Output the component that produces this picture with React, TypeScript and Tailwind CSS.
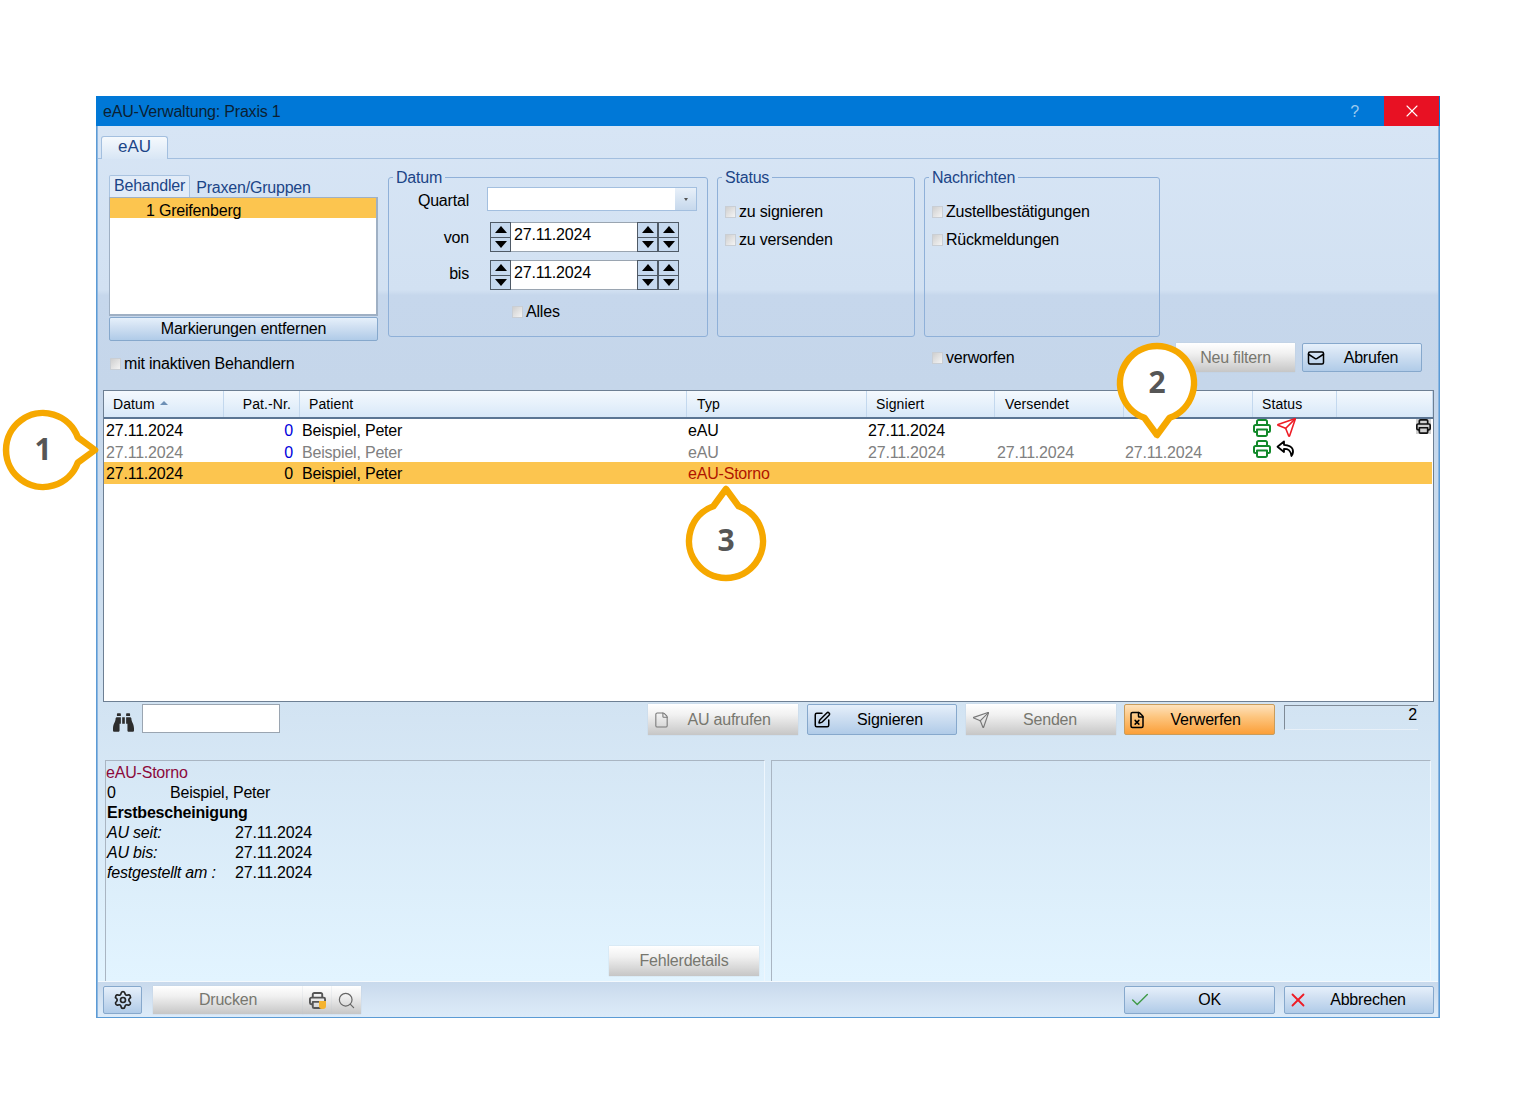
import type { ReactNode } from "react";
import { Check, File, FileX, Mail, Search, Send, Settings, SquarePen, X } from "lucide-react";
import { FaBinoculars } from "react-icons/fa";

const grayBtn = "bg-[linear-gradient(180deg,#ffffff_0%,#f1f1f1_35%,#c6c6c6_100%)] text-[#77776f] shadow-[0_0_1px_#b9c4cf]";
const blueBtn = "bg-[linear-gradient(180deg,#e6f0fb_0%,#d3e2f3_35%,#b0cbe8_100%)] text-black border border-[#86a8cc] rounded-[2px]";
const orangeBtn = "bg-[linear-gradient(180deg,#fde2bd_0%,#fdc680_40%,#fb9f38_100%)] text-black border border-[#c89c5c] rounded-[2px]";

function Btn({ className, icon, children }: { className: string; icon?: ReactNode; children: ReactNode }) {
  return (
    <button className={`relative flex items-center justify-center shrink-0 ${className}`}>
      {icon && <span className="absolute left-[6px] top-1/2 -translate-y-1/2 flex">{icon}</span>}
      {children}
    </button>
  );
}

function Checkbox({ label, className = "" }: { label: string; className?: string }) {
  return (
    <div className={`flex items-center ${className}`}>
      <span className="w-[11px] h-[12px] mr-[3px] shrink-0 bg-[linear-gradient(135deg,#cfcfcf_0%,#f4f4f4_100%)] border border-[#c9ced4]" />
      <span>{label}</span>
    </div>
  );
}

function GroupBox({ title, className, children }: { title: string; className: string; children?: ReactNode }) {
  return (
    <fieldset className={`border border-[#8fb0d8] rounded-[3px] h-[170px] shrink-0 px-[8px] ${className}`}>
      <legend className="text-[#1c4587] leading-[20px] px-[3px] -ml-[4px]">
        <span className="relative top-px">{title}</span>
      </legend>
      {children}
    </fieldset>
  );
}

function Spinner() {
  return (
    <div className="w-[21px] h-full flex flex-col border border-[#4f5a66] bg-[#c6d9ef] shrink-0">
      <div className="flex-1 flex items-center justify-center border-b border-[#4f5a66]">
        <span className="w-0 h-0 border-x-[6px] border-x-transparent border-b-[7px] border-b-black" />
      </div>
      <div className="flex-1 flex items-center justify-center">
        <span className="w-0 h-0 border-x-[6px] border-x-transparent border-t-[7px] border-t-black" />
      </div>
    </div>
  );
}

function DateField({ label, className, labelClass }: { label: string; className: string; labelClass: string }) {
  return (
    <div className={`flex items-center h-[30px] ${className}`}>
      <span className={`w-[72px] text-right mr-[21px] shrink-0 ${labelClass}`}>{label}</span>
      <Spinner />
      <div className="w-[126px] h-full bg-white pl-[3px] leading-[23px] border-y border-[#9aa5b1]">27.11.2024</div>
      <Spinner />
      <Spinner />
    </div>
  );
}

function PrinterIcon({ color, size = 18 }: { color: string; size?: number }) {
  return (
    <svg width={size} height={size} viewBox="0 0 18 18" fill="none" stroke={color} strokeWidth="2" strokeLinejoin="round">
      <path d="M4 6V2.5A1.5 1.5 0 0 1 5.5 1h7A1.5 1.5 0 0 1 14 2.5V6" />
      <path d="M4 13H2.5A1.5 1.5 0 0 1 1 11.5V7.5A1.5 1.5 0 0 1 2.5 6h13A1.5 1.5 0 0 1 17 7.5v4a1.5 1.5 0 0 1-1.5 1.5H14" />
      <path d="M4 10.5h10V15.5a1.5 1.5 0 0 1-1.5 1.5h-7A1.5 1.5 0 0 1 4 15.5z" />
    </svg>
  );
}

function ReplyIcon() {
  return (
    <svg width="20" height="18" viewBox="0 0 20 18" fill="none" stroke="#000" strokeWidth="1.8" strokeLinejoin="round" className="ml-[5px]">
      <path d="M8 1.5 1.5 6.8 8 12V8.8c4 0 6.6 1 7.4 7.2 2.6-3.6 3.2-10.6-7.4-11.2z" />
    </svg>
  );
}

const rowGrid = "grid grid-cols-[120px_76px_387px_180px_128px_129px_129px_84px_1fr]";

type Row = { pat: string; typ: string; signiert?: string; versendet?: string; col?: string; tone: "normal" | "gray" | "selected"; status?: ReactNode; last?: ReactNode };

const rows: Row[] = [
  {
    pat: "0",
    typ: "eAU",
    signiert: "27.11.2024",
    tone: "normal",
    status: (
      <>
        <PrinterIcon color="#12892a" />
        <Send size={21} color="#ee1c25" strokeWidth={1.8} className="ml-[5px] -mt-[2px]" />
      </>
    ),
    last: (
      <span className="bg-[#d0d0d0] flex">
        <PrinterIcon color="#111" size={15} />
      </span>
    ),
  },
  {
    pat: "0",
    typ: "eAU",
    signiert: "27.11.2024",
    versendet: "27.11.2024",
    col: "27.11.2024",
    tone: "gray",
    status: (
      <>
        <PrinterIcon color="#12892a" />
        <ReplyIcon />
      </>
    ),
  },
  { pat: "0", typ: "eAU-Storno", tone: "selected" },
];

function Table() {
  const head = ["Datum", "Pat.-Nr.", "Patient", "Typ", "Signiert", "Versendet", "", "Status", ""];
  return (
    <div className="ml-[5px] mr-[4px] h-[312px] shrink-0 border border-[#6d7f93] bg-white flex flex-col">
      <div className={`${rowGrid} h-[28px] shrink-0 text-[14px] tracking-[0.1px] bg-[linear-gradient(180deg,#f4f9fe_0%,#d8e8f8_100%)] border-b-2 border-[#5b7593]`}>
        {head.map((h, i) => (
          <div key={i} className={`flex items-center border-r border-[#c3d8ee] ${i === 1 ? "justify-end pr-[8px]" : i === 3 || i === 5 ? "pl-[10px]" : "pl-[9px]"}`}>
            {h}
            {i === 0 && <span className="ml-[5px] mb-[3px] w-0 h-0 border-x-[4px] border-x-transparent border-b-[4px] border-b-[#6d8fb5]" />}
          </div>
        ))}
      </div>
      <div className="pl-[1px] pr-[1px]">
        {rows.map((r, i) => {
          const text = r.tone === "gray" ? "text-[#808080]" : "text-black";
          return (
            <div key={i} className={`${rowGrid} h-[21.5px] items-center -ml-[1px] ${text} ${r.tone === "selected" ? "bg-[#fcc54f]" : ""}`}>
              <div className="pl-[2px]">27.11.2024</div>
              <div className={`text-right pr-[7px] ${r.tone === "selected" ? "text-black" : "text-[#0000dc]"}`}>{r.pat}</div>
              <div className="pl-[2px]">Beispiel, Peter</div>
              <div className={`pl-[1px] ${r.tone === "selected" ? "text-[#b01500]" : ""}`}>{r.typ}</div>
              <div className="pl-[1px]">{r.signiert}</div>
              <div className="pl-[2px]">{r.versendet}</div>
              <div className="pl-[1px]">{r.col}</div>
              <div className="flex items-start h-full -mt-[1px]">{r.status}</div>
              <div className="flex justify-end pr-[1px] h-full items-start">{r.last}</div>
            </div>
          );
        })}
      </div>
    </div>
  );
}

function Callout({ n, rotate, className }: { n: string; rotate: number; className: string }) {
  return (
    <div className={`absolute w-[100px] h-[100px] flex items-center justify-center ${className}`}>
      <svg className="absolute inset-0 overflow-visible" width="100" height="100" viewBox="0 0 100 100">
        <path
          d="M37.35 84.8A37 37 0 1 1 62.65 84.8L50 102Z"
          transform={`rotate(${rotate} 50 50)`}
          fill="#ffffff"
          stroke="#f6a800"
          strokeWidth="6.5"
          strokeLinejoin="round"
        />
      </svg>
      <span className="relative -mt-[4px] [font-family:'Open_Sans',sans-serif] font-bold text-[30px] text-[#565656]">{n}</span>
    </div>
  );
}

export default function App() {
  return (
    <div className="relative min-h-[1115px] bg-white pt-[96px] pl-[96px] [font-family:'Liberation_Sans',sans-serif] text-[16px] tracking-[-0.2px] text-black">
      <div className="w-[1344px] h-[922px] flex flex-col border-x border-b border-[#5b9bd5]">
        {/* titel */}
        <div className="h-[30px] shrink-0 bg-[#0078d7] flex items-center -mx-px pl-[7px] pt-px text-[#0b1f33]">
          <span className="flex-1">eAU-Verwaltung: Praxis 1</span>
          <span className="text-[#9cc9ee] mr-[25px]">?</span>
          <span className="w-[55px] h-[30px] -mt-px mr-px bg-[#e81123] flex items-center justify-center">
            <X size={20} color="#fff" strokeWidth={1.3} />
          </span>
        </div>

        <div className="flex-1 min-h-0 flex flex-col bg-[linear-gradient(180deg,#d7e5f5_0%,#d2e1f2_18.4%,#c6d7ec_19%,#c5d6ea_29.2%,#d2e3f2_64.6%,#e2f4ff_95.8%)] border-l border-r border-[#8db6e0]">
          {/* tab */}
          <div className="h-[33px] shrink-0 pt-[10px] pl-[3px] border-b border-[#a3bfdf]">
            <div className="w-[67px] h-[23px] bg-[linear-gradient(180deg,#f5f9fd_0%,#d8e6f5_100%)] border border-b-0 border-[#a3bfdf] rounded-t-[3px] text-center text-[17px] tracking-normal text-[#1c4587] leading-[20px]">
              eAU
            </div>
          </div>

          {/* filter */}
          <div className="h-[231px] shrink-0 flex pl-[11px]">
            <div className="w-[269px] mr-[10px] shrink-0 pt-[16px]">
              <div className="flex h-[22px] items-end text-[#1c4587]">
                <span className="h-[22px] px-[4px] bg-[#e2ecf8] border border-b-0 border-[#a9c3e0] rounded-t-[2px] leading-[19px]">Behandler</span>
                <span className="ml-[6px] leading-[19px]">Praxen/Gruppen</span>
              </div>
              <div className="h-[119px] bg-white border border-[#9fb0c4] border-r-2 border-b-2">
                <div className="h-[20px] bg-[#fcc54f] pl-[36px] leading-[25px]">1 Greifenberg</div>
              </div>
              <Btn className={`${blueBtn} w-full h-[24px] mt-[1px]`}>Markierungen entfernen</Btn>
              <Checkbox label="mit inaktiven Behandlern" className="mt-[11px] ml-[1px]" />
            </div>

            <div className="flex-1 min-w-0 flex flex-col pt-[8px]">
              <div className="flex">
                <GroupBox title="Datum" className="w-[320px] mr-[9px]">
                  <div className="flex items-center h-[24px]">
                    <span className="w-[72px] text-right mr-[18px] shrink-0 mt-[3px]">Quartal</span>
                    <div className="w-[210px] h-full bg-white border border-[#a3bfdf] flex justify-end">
                      <span className="w-[21px] h-full bg-[linear-gradient(180deg,#e8f0f9_0%,#c6d8ec_100%)] flex items-center justify-center">
                        <span className="w-0 h-0 border-x-[2px] border-x-transparent border-t-[3px] border-t-[#555]" />
                      </span>
                    </div>
                  </div>
                  <DateField label="von" className="mt-[11px]" labelClass="mt-px" />
                  <DateField label="bis" className="mt-[8px]" labelClass="-mt-[3px]" />
                  <Checkbox label="Alles" className="mt-[10px] ml-[115px]" />
                </GroupBox>
                <GroupBox title="Status" className="w-[198px] mr-[9px]">
                  <Checkbox label="zu signieren" className="mt-[15px] h-[20px] -ml-px" />
                  <Checkbox label="zu versenden" className="mt-[8px] h-[20px] -ml-px" />
                </GroupBox>
                <GroupBox title="Nachrichten" className="w-[236px]">
                  <Checkbox label="Zustellbestätigungen" className="mt-[15px] h-[20px] -ml-px" />
                  <Checkbox label="Rückmeldungen" className="mt-[8px] h-[20px] -ml-px" />
                </GroupBox>
              </div>
              <div className="flex items-start mt-[6px] pl-[544px]">
                <Checkbox label="verworfen" className="w-[244px] mt-[3px]" />
                <Btn className={`${grayBtn} w-[119px] h-[29px]`}>Neu filtern</Btn>
                <Btn className={`${blueBtn} w-[120px] h-[29px] ml-[7px] pl-[18px]`} icon={<Mail size={18} strokeWidth={2} className="-ml-[2px]" />}>
                  Abrufen
                </Btn>
              </div>
            </div>
          </div>

          <Table />

          {/* werkzeuge */}
          <div className="h-[58px] shrink-0 flex items-start pt-[2px] pl-[15px]">
            <FaBinoculars size={21} color="#2d2d2d" className="mt-[8px] mr-[8px]" />
            <div className="w-[138px] h-[29px] bg-white border border-[#9aa5b1]" />
            <Btn className={`${grayBtn} w-[150px] h-[31px] ml-[368px] pl-[12px]`} icon={<File size={17} color="#777" strokeWidth={1.5} className="-ml-px" />}>
              AU aufrufen
            </Btn>
            <Btn className={`${blueBtn} w-[150px] h-[31px] ml-[9px] pl-[16px]`} icon={<SquarePen size={18} strokeWidth={2} className="-ml-px" />}>
              Signieren
            </Btn>
            <Btn className={`${grayBtn} w-[150px] h-[31px] ml-[9px] pl-[18px]`} icon={<Send size={18} color="#777" strokeWidth={1.5} />}>
              Senden
            </Btn>
            <Btn className={`${orangeBtn} w-[151px] h-[31px] ml-[8px] pl-[12px]`} icon={<FileX size={18} strokeWidth={2} className="-ml-[3px]" />}>
              Verwerfen
            </Btn>
            <div className="w-[134px] h-[25px] ml-[9px] mt-px border-l border-t border-[#7f8a96] border-b border-b-[#e8f0f8] text-right pr-px leading-[18px]">2</div>
          </div>

          {/* details */}
          <div className="h-[221px] shrink-0 flex pl-[7px] pr-[7px]">
            <div className="w-[660px] h-full border-l border-t border-[#a9b5c2] border-r border-r-[#eef6fd] flex flex-col leading-[20px] pt-[2px]">
              <div className="text-[#8c0a3c]">eAU-Storno</div>
              <div className="flex">
                <span className="w-[64px] pl-px">0</span>
                <span>Beispiel, Peter</span>
              </div>
              <div className="font-bold pl-px">Erstbescheinigung</div>
              {["AU seit:", "AU bis:", "festgestellt am :"].map((l) => (
                <div key={l} className="flex">
                  <span className="w-[129px] pl-px italic">{l}</span>
                  <span>27.11.2024</span>
                </div>
              ))}
              <Btn className={`${grayBtn} w-[150px] h-[30px] mt-auto mb-[5px] self-end mr-[5px]`}>Fehlerdetails</Btn>
            </div>
            <div className="flex-1 h-full ml-[6px] border-l border-t border-[#a9b5c2] border-r border-r-[#eef6fd]" />
          </div>

          {/* unten */}
          <div className="h-[36px] shrink-0 flex items-start pt-[4px] pl-[5px] border-t border-[#f4f9fd] bg-[linear-gradient(180deg,#c8d9ec_0%,#d6e5f4_60%,#dcebf9_100%)]">
            <Btn className={`${blueBtn} w-[39px] h-[28px]`}>
              <Settings size={20} strokeWidth={2} color="#222" />
            </Btn>
            <Btn className={`${grayBtn} w-[150px] h-[28px] ml-[11px]`}>Drucken</Btn>
            <Btn className={`${grayBtn} w-[29px] h-[28px]`}>
              <span className="relative flex">
                <PrinterIcon color="#555" size={17} />
                <span className="absolute right-0 bottom-0 w-[7px] h-[8px] bg-[#f5b32e] rounded-b-[3px]" />
              </span>
            </Btn>
            <Btn className={`${grayBtn} w-[29px] h-[28px]`}>
              <Search size={19} color="#666" strokeWidth={1.5} />
            </Btn>
            <Btn className={`${blueBtn} w-[151px] h-[28px] ml-[763px] pl-[20px]`} icon={<Check size={22} color="#3e9a45" strokeWidth={1.5} className="-ml-[2px]" />}>
              OK
            </Btn>
            <Btn className={`${blueBtn} w-[150px] h-[28px] ml-[9px] pl-[18px]`} icon={<X size={22} color="#ee1c25" strokeWidth={2} className="-ml-[4px]" />}>
              Abbrechen
            </Btn>
          </div>
        </div>
      </div>

      <Callout n="1" rotate={-90} className="left-[-7px] top-[400px]" />
      <Callout n="2" rotate={0} className="left-[1107px] top-[333px]" />
      <Callout n="3" rotate={180} className="left-[676px] top-[491px]" />
    </div>
  );
}
